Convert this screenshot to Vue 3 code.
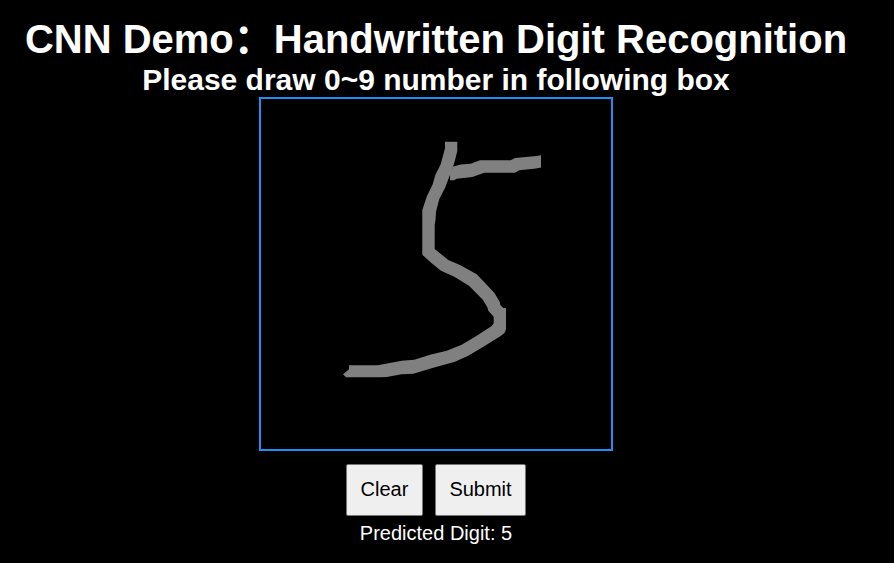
<script setup>
import { ref } from 'vue'

const strokes = [
  'M445 141.7H457.300V151L454.300 163L452.700 168L449.300 176.700L445 188L439.300 199L436 211.700L435.500 220L434.700 225V249L448.300 260L460 265L476.700 274.300L494.300 292.700L499.700 301.700L500.300 305L503.300 308H506V329.300L504.500 333L500.700 336L485 345.700L468.300 355.700L455 361.700L433.300 367.700L413.300 373.700L401.700 374.300L386.700 377L380 377.300H346L343 374.300L349 369.300V365.300H377.700L401.700 360.700L414.300 359.700L430 354.700L446.700 350.700L461.700 344.700L476.700 335.700L491.700 326L493.700 323.300V316.700L488.300 310.700L487.300 307.300L483 300L469 285.700L454.300 276.700L441 270.700L431.700 263.300L422.300 254.700V210L427 196L432.700 184.300L435.300 175L440.700 164.300L445 148.300Z',
  'M450 180.300V173L453.300 166.500L460.700 164.500L470.700 163.700L480 160.300H510.700L515 158L536.700 156L541 155.300V167.500L536 168.500L519.300 170.300L515 172.700H484.300L472.300 177L456.700 178.700L454 180.300Z',
]
const visible = ref(true)
const prediction = ref('5')

function clearDrawing() {
  visible.value = false
  prediction.value = ''
}
</script>

<template>
  <main class="demo">
    <h1>CNN Demo&#xFF1A;Handwritten Digit Recognition</h1>
    <h2>Please draw 0~9 number in following box</h2>
    <svg class="board" viewBox="261 99 350 350">
      <g v-if="visible" fill="#808080">
        <path v-for="(stroke, i) in strokes" :key="i" :d="stroke" />
      </g>
    </svg>
    <div class="actions">
      <button class="clear" type="button" @click="clearDrawing">Clear</button>
      <button class="submit" type="button">Submit</button>
    </div>
    <p>Predicted Digit: {{ prediction }}</p>
  </main>
</template>

<style>
body {
  background: #000;
}
</style>

<style scoped>
.demo {
  box-sizing: border-box;
  width: 872px;
  height: 563px;
  padding-top: 16px;
  display: flex;
  flex-direction: column;
  align-items: center;
  color: #fff;
  font-family: "Liberation Sans", "Noto Sans CJK SC", sans-serif;
  font-size: 20px;
}
h1 {
  margin: 0;
  height: 46px;
  font-size: 40px;
  line-height: 46px;
  white-space: nowrap;
}
h2 {
  margin: 0;
  font-size: 30px;
  line-height: 35px;
  white-space: nowrap;
}
.board {
  display: block;
  width: 350px;
  height: 350px;
  border: 2px solid #1f8ff2;
}
.actions {
  display: flex;
  gap: 12px;
  margin-top: 13px;
}
button {
  box-sizing: border-box;
  height: 52px;
  padding: 0 0 2px;
  border: 1px solid #767676;
  border-radius: 2px;
  background: #efefef;
  color: #000;
  font: 20px "Liberation Sans", Arial, sans-serif;
}
.clear {
  width: 77px;
}
.submit {
  width: 91px;
}
p {
  margin: 5px 0 0;
  line-height: 24px;
}
</style>
